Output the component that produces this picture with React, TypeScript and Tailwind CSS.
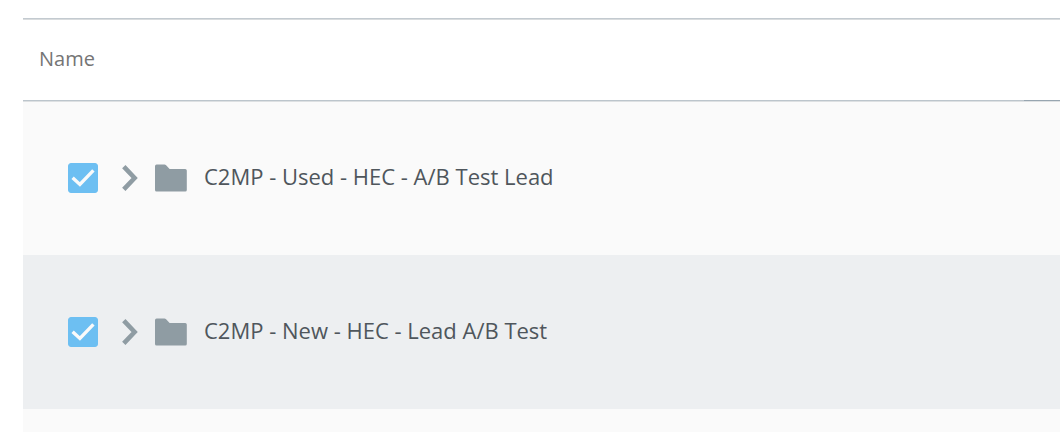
import { useState } from 'react';

interface Campaign {
  id: string;
  name: string;
}

const campaigns: Campaign[] = [
  { id: 'used', name: 'C2MP - Used - HEC - A/B Test Lead' },
  { id: 'new', name: 'C2MP - New - HEC - Lead A/B Test' },
];

function ChevronIcon() {
  return (
    <svg viewBox="0 0 16 26" className="w-4 h-[26px]" aria-hidden="true">
      <path d="M1.8 1.6 12.6 13 1.8 24.4" fill="none" stroke="#8f9ca3" strokeWidth="4.6" />
    </svg>
  );
}

function FolderIcon() {
  return (
    <svg viewBox="0 0 32 28" className="w-8 h-7 shrink-0" aria-hidden="true">
      <path
        d="M1.6 0.6H9.4Q10.4 0.6 11.1 1.3L14.6 5H30.2Q31.8 5 31.8 6.6V26Q31.8 27.6 30.2 27.6H1.6Q0 27.6 0 26V2.2Q0 0.6 1.6 0.6Z"
        fill="#8f9ca3"
      />
    </svg>
  );
}

function CampaignRow({ campaign }: { campaign: Campaign }) {
  const [checked, setChecked] = useState(true);

  return (
    <tr className="group h-[154px] bg-[#fafafa] even:bg-[#edeff1]">
      <td
        colSpan={2}
        className="p-0 pl-[45px] align-middle group-first:shadow-[inset_0_1px_0_#dde0e2]"
      >
        <div className="flex items-center">
          <span className="grid shrink-0">
            <input
              id={campaign.id}
              type="checkbox"
              checked={checked}
              onChange={(e) => setChecked(e.target.checked)}
              className="col-start-1 row-start-1 size-[30px] appearance-none rounded-[3px] border border-[#6dbff2] checked:bg-[#6dbff2]"
            />
            {checked && (
              <svg
                viewBox="0 0 30 30"
                className="col-start-1 row-start-1 size-[30px] pointer-events-none"
                aria-hidden="true"
              >
                <path d="M4.6 14.7 11.9 21.4 25.4 7.4" fill="none" stroke="#fafafa" strokeWidth="3.4" />
              </svg>
            )}
          </span>
          <button type="button" aria-label="Expand" className="ml-6 shrink-0">
            <ChevronIcon />
          </button>
          <span className="ml-[17px] flex items-center gap-[17px]">
            <FolderIcon />
            <label htmlFor={campaign.id} className="pb-1 text-[22px] leading-7 text-[#4f565c]">
              {campaign.name}
            </label>
          </span>
        </div>
      </td>
    </tr>
  );
}

export default function App() {
  return (
    <main className="bg-white pt-[18px] pl-[23px] font-['Open_Sans','Noto_Sans',sans-serif]">
      <div className="border-t border-[#c3cad0]">
        <table className="w-full border-separate border-spacing-0 border-t border-[#d9dcde]">
          <thead>
            <tr className="h-[81px]">
              <th
                scope="col"
                className="border-b border-[#bcc5cc] p-0 pb-0.5 pl-4 text-left text-xl font-normal text-[#757575]"
              >
                Name
              </th>
              <td className="w-9 border-b border-[#97a5b0] p-0" />
            </tr>
          </thead>
          <tbody>
            {campaigns.map((campaign) => (
              <CampaignRow key={campaign.id} campaign={campaign} />
            ))}
            <tr className="h-[23px] bg-[#fafafa]">
              <td colSpan={2} className="p-0" />
            </tr>
          </tbody>
        </table>
      </div>
    </main>
  );
}
